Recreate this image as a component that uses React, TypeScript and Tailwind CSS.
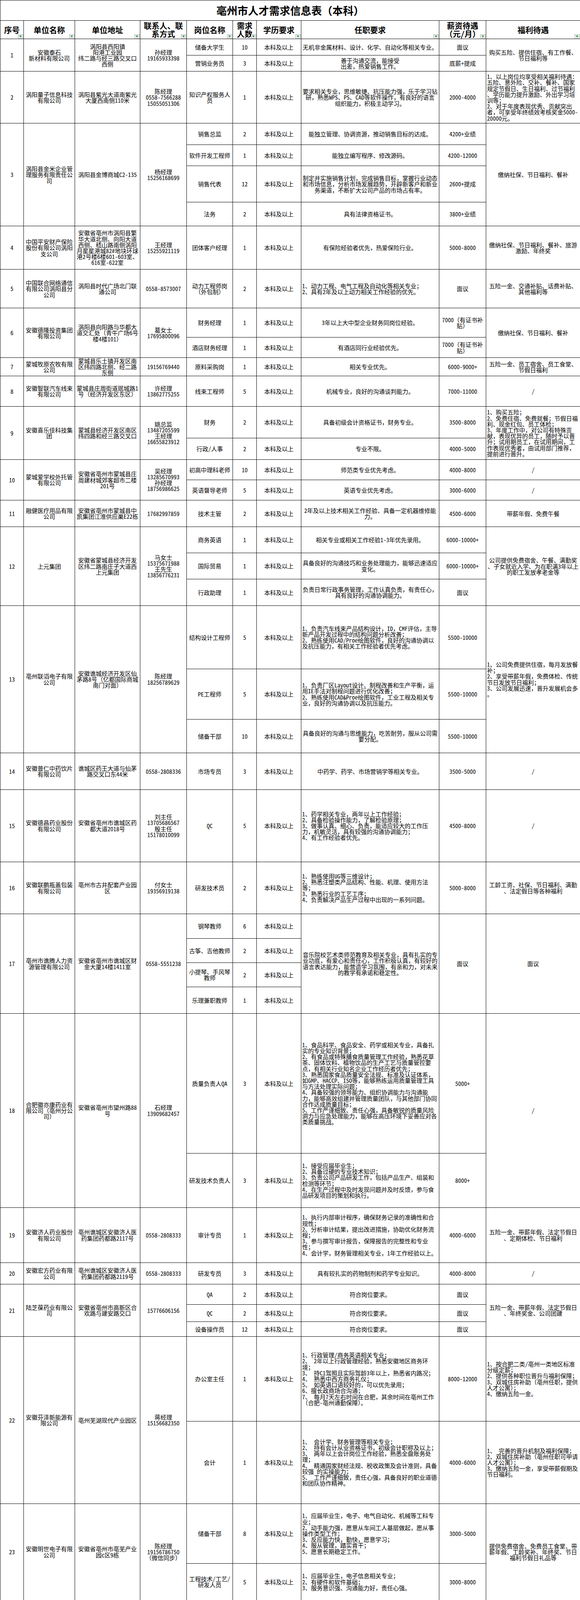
import React from "react";

type C = { t: string; l?: boolean };
type Sub = { h: string; p: string; n: string; r?: C; s?: C; b?: C };
type Co = { no: string; name: string; addr: string; ct: string; subs: Sub[]; r?: C; s?: C; b?: C };

const data: Co[] = [
  {
    no: "1", name: "安徽泰石\n新材料有限公司", addr: "涡阳县西阳镇\n阳港工业园\n纬二路与经三路交叉口\n西侧", ct: "孙经理\n19165933398",
    b: { t: "购买五险、提供住宿、有工作餐、\n节日福利等" },
    subs: [
      { h: "h-[42px]", p: "储备大学生", n: "10", r: { t: "无机非金属材料、设计、化学、自动化等相关专业。" }, s: { t: "面议" } },
      { h: "h-[41px]", p: "营销业务员", n: "3", r: { t: "善于沟通交流，能接受\n出差，热爱销售工作。" }, s: { t: "底薪+提成" } },
    ],
  },
  {
    no: "2", name: "涡阳量子信息科技\n有限公司", addr: "涡阳县紫光大道南紫光\n大厦西南侧110米", ct: "陈经理\n0558-7566288\n15055051306",
    subs: [
      {
        h: "h-[133px]", p: "知识产权服务人\n员", n: "1",
        r: { t: "要求相关专业，思维敏捷、抗压能力强，乐于学习钻\n研，熟悉WPS、PS、CAD等软件操作，有良好的语言\n组织能力，积极主动学习。" },
        s: { t: "2000-4000" },
        b: { l: true, t: "1、以上岗位均享受相关福利待遇：\n五险、意外险、交补、餐补、国家\n规定节假日、生日福利、过节福利\n、学历能力提升激励、外出学习培\n训等；\n2、对于年度表现优秀、贡献突出\n者，可享受年终绩效考核奖金5000-\n20000元。" },
      },
    ],
  },
  {
    no: "3", name: "涡阳县金米企业管\n理服务有限责任公\n司", addr: "涡阳县金博商城C2-135", ct: "杨经理\n15256168699",
    b: { t: "缴纳社保、节日福利、餐补" },
    subs: [
      { h: "h-[55px]", p: "销售总监", n: "2", r: { t: "能独立管理、协调资源，推动销售目标的达成。" }, s: { t: "4200+业绩" } },
      { h: "h-[54px]", p: "软件开发工程师", n: "1", r: { t: "能独立编写程序、修改源码。" }, s: { t: "4200-12000" } },
      { h: "h-[93px]", p: "销售代表", n: "12", r: { t: "制定并实施销售计划，完成销售目标，掌握行业动态\n和市场信息，分析市场发展趋势，开辟新客户和新业\n务渠道，不断扩大公司产品的市场占有率。" }, s: { t: "2600+提成" } },
      { h: "h-[61px]", p: "法务", n: "2", r: { t: "具有法律资格证书。" }, s: { t: "3800+业绩" } },
    ],
  },
  {
    no: "4", name: "中国平安财产保险\n股份有限公司涡阳\n支公司", addr: "安徽省亳州市涡阳县繁\n华大道北侧、向阳大道\n西侧、嵇山路南侧涡阳\n月星星港城82#地块环球\n港2号楼6楼601-603室、\n616室-622室", ct: "王经理\n15255921119",
    subs: [
      { h: "h-[111px]", p: "团体客户经理", n: "1", r: { t: "有保险经验者优先，热爱保险行业。" }, s: { t: "5000-8000" }, b: { t: "缴纳社保、节日福利、餐补、旅游\n激励、年终奖" } },
    ],
  },
  {
    no: "5", name: "中国联合网络通信\n有限公司涡阳县分\n公司", addr: "涡阳县时代广场北门联\n通公司", ct: "0558-8573007",
    subs: [
      { h: "h-[99px]", p: "动力工程师岗\n（外包制）", n: "2", r: { l: true, t: "1、动力工程、电气工程及自动化等相关专业；\n2、具有2年及以上动力相关工作经验的优先。" }, s: { t: "面议" }, b: { t: "五险一金、交通补贴、话费补贴、\n其他福利等" } },
    ],
  },
  {
    no: "6", name: "安徽德隆投资集团\n有限公司", addr: "涡阳县向阳路与华都大\n道交汇处（青牛广场6号\n楼4楼101）", ct: "葛女士\n17695800096",
    b: { t: "缴纳社保、节日福利、餐补" },
    subs: [
      { h: "h-[75px]", p: "财务经理", n: "1", r: { t: "3年以上大中型企业财务同岗位经验。" }, s: { t: "7000（有证书补\n贴）" } },
      { h: "h-[52px]", p: "酒店财务经理", n: "1", r: { t: "有酒店同行业经验优先。" }, s: { t: "7000（有证书补\n贴）" } },
    ],
  },
  {
    no: "7", name: "蒙城牧原农牧有限\n公司", addr: "蒙城县乐土镇开发区南\n区纬四路北侧、经二路\n东侧", ct: "19156769440",
    subs: [
      { h: "h-[46px]", p: "原料采购岗", n: "1", r: { t: "相关专业优先。" }, s: { t: "6000-9000+" }, b: { t: "五险一金、员工宿舍、员工食堂、\n节假日福利" } },
    ],
  },
  {
    no: "8", name: "安徽智联汽车线束\n有限公司", addr: "蒙城县庄周街道珉城路1\n号（经济开发区东区）", ct: "许经理\n13862775255",
    subs: [
      { h: "h-[78px]", p: "线束工程师", n: "5", r: { t: "机械专业，良好的沟通谈判能力。" }, s: { t: "7000-11000" }, b: { t: "/" } },
    ],
  },
  {
    no: "9", name: "安徽喜乐佳科技集\n团", addr: "蒙城县经济开发区南区\n纬四路和经三路交叉口", ct: "姚总监\n13487205599\n王经理\n16655823912",
    b: { l: true, t: "1、购买五险；\n2、免费住宿、免费就餐；节假日福\n利、现金红包、员工体检；\n3、年度工作中，对公司有特殊贡\n献，表现优异的员工，随时予以晋\n升；试用期员工，在试用期间，工\n作表现优秀者，由试用部门推荐，\n提前进行晋升。" },
    subs: [
      { h: "h-[81px]", p: "财务", n: "2", r: { t: "具备初级会计资格证书，财务专业。" }, s: { t: "3500-8000" } },
      { h: "h-[55px]", p: "行政/人事", n: "2", r: { t: "专业不限。" }, s: { t: "4000-5000" } },
    ],
  },
  {
    no: "10", name: "蒙城爱学校外托管\n有限公司", addr: "安徽省亳州市蒙城县庄\n周建材城郊客超市二楼\n201号", ct: "吴经理\n13285670993\n孙经理\n18756986625",
    subs: [
      { h: "h-[52px]", p: "初高中理科老师", n: "10", r: { t: "师范类专业优先考虑。" }, s: { t: "4000-8000" }, b: { t: "/" } },
      { h: "h-[52px]", p: "英语督导老师", n: "5", r: { t: "英语专业优先考虑。" }, s: { t: "3000-6000" }, b: { t: "/" } },
    ],
  },
  {
    no: "11", name: "融健医疗用品有限\n公司", addr: "安徽省亳州市蒙城县中\n凯集团江淮供应巢E22栋", ct: "17682997859",
    subs: [
      { h: "h-[68px]", p: "技术主管", n: "2", r: { t: "2年及以上技术相关工作经验、具备一定机器维修能\n力。" }, s: { t: "4500-6000" }, b: { t: "带薪年假、免费午餐" } },
    ],
  },
  {
    no: "12", name: "上元集团", addr: "安徽省蒙城县经济开发\n区纬二路南庄子大道西\n上元集团", ct: "马女士\n15375671988\n王先生\n13856776231",
    b: { t: "公司提供免费宿舍、午餐、满勤奖\n、子女就近入学、为在职满3年以上\n的职工发放孝老金等" },
    subs: [
      { h: "h-[67px]", p: "商务英语", n: "1", r: { t: "相关专业或相关工作经验1-3年优先录用。" }, s: { t: "6000-10000+" } },
      { h: "h-[67px]", p: "国际贸易", n: "1", r: { t: "具备良好的沟通技巧和业务处理能力，能够迅速适应\n变化。" }, s: { t: "6000-10000+" } },
      { h: "h-[68px]", p: "行政助理", n: "1", r: { t: "负责日常行政事务管理，工作认真负责，有责任心，\n具有良好的沟通协调能力。" }, s: { t: "面议" } },
    ],
  },
  {
    no: "13", name: "亳州联滔电子有限\n公司", addr: "安徽谯城经济开发区仙\n茅路8号（亿都国际商城\n南门对面）", ct: "陈经理\n18256789629",
    b: { l: true, t: "1、公司免费提供住宿，每月发放餐\n补；\n2、享受带薪年假，免费体检、传统\n节日发放节日福利；\n3、公司发展迅速，晋升发展机会多\n。" },
    subs: [
      { h: "h-[162px]", p: "结构设计工程师", n: "5", r: { l: true, t: "1、负责汽车线束产品结构设计，ID，CMF评估，主导\n新产品开发过程中的结构问题分析改善；\n2、熟练使用CAD/Proe绘图软件，良好的沟通协调以\n及抗压能力，有相关工作经验者优先考虑。" }, s: { t: "5500-10000" } },
      { h: "h-[129px]", p: "PE工程师", n: "5", r: { l: true, t: "1、负责厂区Layout设计、制程改善和生产平衡，运\n用IE手法对制程问题进行优化改善；\n2、熟练使用CAD&Proe绘图软件，工业工程及相关专\n业，良好的沟通协调以及抗压能力。" }, s: { t: "5500-10000" } },
      { h: "h-[86px]", p: "储备干部", n: "10", r: { t: "具备良好的沟通与思维能力，吃苦耐劳，服从公司需\n要分配。" }, s: { t: "5500-10000" } },
    ],
  },
  {
    no: "14", name: "安徽普仁中药饮片\n有限公司", addr: "谯城区药王大道与仙茅\n路交叉口东44米", ct: "0558-2808336",
    subs: [
      { h: "h-[94px]", p: "市场专员", n: "3", r: { t: "中药学、药学、市场营销学等相关专业。" }, s: { t: "3500-5000" }, b: { t: "/" } },
    ],
  },
  {
    no: "15", name: "安徽德昌药业股份\n有限公司", addr: "安徽省亳州市谯城区药\n都大道2018号", ct: "刘主任\n13705686567\n殷主任\n15178010099",
    subs: [
      { h: "h-[185px]", p: "QC", n: "5", r: { l: true, t: "1、药学相关专业，两年以上工作经验；\n2、具备检验操作能力，了解检验原理；\n3、做事认真、细心、负责，能适应较大的工作压\n力，机敏灵活，具有较强的沟通协调能力；\n4、有工作经验者优先。" }, s: { t: "4500-8000" }, b: { t: "/" } },
    ],
  },
  {
    no: "16", name: "安徽联鹏瓶盖包装\n有限公司", addr: "亳州市古井配套产业园\n区", ct: "付女士\n19356919138",
    subs: [
      { h: "h-[133px]", p: "研发技术员", n: "2", r: { l: true, t: "1、熟练使用UG等三维设计；\n2、熟悉注塑类产品结构、性能、机理、使用方法\n等；\n3、熟悉行业的工艺工序；\n4、负责解决产品生产过程中出现的一系列问题。" }, s: { t: "5000-8000" }, b: { t: "工龄工资、社保、节日福利、满勤\n、法定假日等各种福利" } },
    ],
  },
  {
    no: "17", name: "亳州市谯腾人力资\n源管理有限公司", addr: "安徽省亳州市谯城区财\n金大厦14楼1411室", ct: "0558-5551238",
    r: { t: "音乐院校艺术类师范教育及相关专业，具有扎实的专\n业功底，有爱心和责任心，工作积极认真，有较好的\n语言表达能力，能营造学习氛围，有亲和力，对未来\n的教学有承诺和稳定性。" },
    s: { t: "面议" }, b: { t: "面议" },
    subs: [
      { h: "h-[63px]", p: "钢琴教师", n: "6" },
      { h: "h-[62px]", p: "古筝、吉他教师", n: "2" },
      { h: "h-[62px]", p: "小提琴、手风琴\n教师", n: "2" },
      { h: "h-[68px]", p: "乐理兼职教师", n: "1" },
    ],
  },
  {
    no: "18", name: "合肥徽亦康药业有\n限公司（亳州分公\n司）", addr: "安徽省亳州市望州路88\n号", ct: "石经理\n13909682457",
    b: { t: "/" },
    subs: [
      { h: "h-[358px]", p: "质量负责人QA", n: "3", r: { l: true, t: "1、食品科学、食品安全、药学或相关专业，具备扎\n实的专业知识背景；\n2、有食品或特殊膳食质量管理工作经验，熟悉花草\n茶、固体饮料、植物饮品的生产工艺与质量管控要\n点，有相关行业知名企业工作经历者优先；\n3、熟悉国家食品质量安全法规、标准及认证体系，\n如GMP、HACCP、ISO等，能够熟练运用质量管理工具\n与方法处理实际问题；\n4、具备较强的领导能力、组织协调能力与沟通能\n力，能够高效组建并管理质量团队，与其他部门协同\n合作达成质量目标；\n5、工作严谨细致、责任心强，具备敏锐的质量风险\n洞力与应急处理能力，能够在高压环境下妥善应对各\n类质量挑战。" }, s: { t: "5000+" } },
      { h: "h-[139px]", p: "研发技术负责人", n: "3", r: { l: true, t: "1、接受应届毕业生；\n2、具备过硬的专业技术知识；\n3、负责公司产品研发工作，包括产品生产、组装和\n检测等环节；\n4、在生产过程中及时发现问题并及时反馈，参与食\n品研发项目的策划和执行。" }, s: { t: "8000+" } },
    ],
  },
  {
    no: "19", name: "安徽济人药业股份\n有限公司", addr: "亳州谯城区安徽济人医\n药集团药都路2117号", ct: "0558-2808333",
    subs: [
      { h: "h-[141px]", p: "审计专员", n: "1", r: { l: true, t: "1、执行内部审计程序，确保财务记录的准确性和合\n规性；\n2、分析审计结果，提出改进措施，协助优化财务流\n程；\n3、参与撰写审计报告，保障报告的完整性和专业\n性；\n4、会计学，财务管理相关专业，1年工作经验以上。" }, s: { t: "4000-6000" }, b: { t: "五险一金、带薪年假、法定节假日\n、定期体检、节日福利" } },
    ],
  },
  {
    no: "20", name: "安徽宏方药业有限\n公司", addr: "亳州谯城区安徽济人医\n药集团药都路2119号", ct: "0558-2808333",
    subs: [
      { h: "h-[55px]", p: "研发专员", n: "3", r: { t: "具有较扎实的药物制剂和药学专业知识。" }, s: { t: "4000-8000" }, b: { t: "/" } },
    ],
  },
  {
    no: "21", name: "陆芝葆药业有限公\n司", addr: "安徽省亳州市高新区合\n欢路与建安路交口", ct: "15776606156",
    b: { t: "五险一金、带薪年假、法定节假日\n、年终奖金、公司团建" },
    subs: [
      { h: "h-[52px]", p: "QA", n: "2", r: { t: "符合岗位要求。" }, s: { t: "面议" } },
      { h: "h-[44px]", p: "QC", n: "2", r: { t: "符合岗位要求。" }, s: { t: "面议" } },
      { h: "h-[38px]", p: "设备操作员", n: "12", r: { t: "符合岗位要求。" }, s: { t: "面议" } },
    ],
  },
  {
    no: "22", name: "安徽芬泽新能源有\n限公司", addr: "亳州芜湖现代产业园区", ct: "蒋经理\n15156682350",
    subs: [
      {
        h: "h-[217px]", p: "办公室主任", n: "1",
        r: { l: true, t: "1、行政管理/商务英语相关专业；\n2、 2年以上行政管理经验，熟悉安徽地区商务环\n境；\n3、 持C1驾照且实际驾龄3年以上，熟悉省内路况；\n4、 熟悉中西方商务礼仪；\n5、 如英语口语较好的，可以优先录用；\n6、擅长政商场合沟通；\n7、 每月7天左右时间在合肥，其余时间在亳州工作\n（合肥-亳州通勤保障）。" },
        s: { t: "8000-12000" },
        b: { l: true, t: "1、按合肥二类/亳州一类地区标准\n分级定薪；\n2、提供各种职位晋升与福利保障；\n3、双城住房补助（亳州任职，提供\n人才公寓）；\n4、缴纳五险一金。" },
      },
      {
        h: "h-[211px]", p: "会计", n: "1",
        r: { l: true, t: "1、 会计学、财务管理等相关专业；\n2、 持有会计从业资格证书，初级会计职称及以上；\n3、 两年以上会计岗位工作经验，熟悉全盘账务处\n理；\n4、 精通国家财经法规、税收政策及会计准则，具备\n较强 的实操能力；\n5、 工作严谨细致，责任心强，具备良好的职业道德\n和团队协作精神。" },
        s: { t: "4000-6000" },
        b: { l: true, t: "1、 完善的晋升机制及福利保障；\n2、双城住房补助（亳州任职可申请\n人才公寓）；\n3、缴纳五险一金，享受带薪假期及\n节日福利。" },
      },
    ],
  },
  {
    no: "23", name: "安徽明世电子有限\n公司", addr: "安徽省亳州市亳芜产业\n园c区9栋", ct: "陈经理\n19156786750\n（微信同步）",
    b: { t: "提供免费宿舍、免费员工食堂、带\n薪年假、工龄奖补、年终奖、节日\n福利节假日礼品等" },
    subs: [
      { h: "h-[153px]", p: "储备干部", n: "8", r: { l: true, t: "1、应届毕业生，电子、电气自动化、机械等工科专\n业；\n2、动手能力强，愿意从车间工人基层做起，愿从事\n操作类型工作；\n3、反应能力快，勤快，愿意学习；\n4、服从管理，踏实肯干；\n5、愿意长期稳定工作。" }, s: { t: "3000-5000" } },
      { h: "h-[94px]", p: "工程技术/工艺/\n研发人员", n: "5", r: { l: true, t: "1、应届毕业生，电子信息相关专业；\n2、有硬件和软件基础；\n3、服务意识强、沟通能力好，责任心强。" }, s: { t: "3000-8000" } },
    ],
  },
];

const base = "border border-black align-middle px-[2px] py-0 whitespace-pre leading-[15.2px]";

function Cell({ c, rowSpan }: { c: C; rowSpan?: number }) {
  return (
    <td rowSpan={rowSpan} className={`${base} ${c.l ? "text-left" : "text-center"}`}>
      {c.t}
    </td>
  );
}

function Filter() {
  return (
    <span className="absolute right-[1px] bottom-[1px] flex h-[10px] w-[13px] items-center justify-center border border-[#a6a6a6] bg-[#f3f3f3]">
      <svg width="7" height="5" viewBox="0 0 7 5">
        <path d="M0 0H7L3.5 5Z" fill="#1f9d48" />
      </svg>
    </span>
  );
}

function Th({ t }: { t: string }) {
  return (
    <th className="relative whitespace-pre border border-black p-0 align-middle text-center text-[20px] font-bold leading-[21px]">
      {t}
      <Filter />
    </th>
  );
}

export default function App() {
  const widths = ["w-[60px]", "w-[131px]", "w-[167px]", "w-[119px]", "w-[118px]", "w-[61px]", "w-[114px]", "w-[353px]", "w-[120px]", "w-[241px]"];
  const heads = ["序号", "单位名称", "单位地址", "联系人、联\n系方式", "岗位名称", "需求\n人数", "学历要求", "任职要求", "薪资待遇\n（元/月）", "福利待遇"];
  return (
    <div className="w-[1484px] bg-white text-black font-['Noto_Sans_Mono_CJK_SC','Noto_Sans_CJK_SC','Liberation_Sans',sans-serif] text-[15px]">
      <table className="w-[1484px] table-fixed border-collapse">
        <colgroup>
          {widths.map((w, i) => (
            <col key={i} className={w} />
          ))}
        </colgroup>
        <tbody>
          <tr className="h-[52px]">
            <td colSpan={10} className="border border-black text-center align-middle text-[27px] font-bold leading-[30px]">
              亳州市人才需求信息表（本科）
            </td>
          </tr>
          <tr className="h-[47px]">
            {heads.map((h) => (
              <Th key={h} t={h} />
            ))}
          </tr>
          {data.map((co) =>
            co.subs.map((s, i) => {
              const rs = co.subs.length;
              return (
                <tr key={co.no + "-" + i} className={s.h}>
                  {i === 0 && (
                    <>
                      <Cell c={{ t: co.no }} rowSpan={rs} />
                      <Cell c={{ t: co.name }} rowSpan={rs} />
                      <Cell c={{ t: co.addr }} rowSpan={rs} />
                      <Cell c={{ t: co.ct }} rowSpan={rs} />
                    </>
                  )}
                  <Cell c={{ t: s.p }} />
                  <Cell c={{ t: s.n }} />
                  <Cell c={{ t: "本科及以上" }} />
                  {co.r ? i === 0 && <Cell c={co.r} rowSpan={rs} /> : s.r && <Cell c={s.r} />}
                  {co.s ? i === 0 && <Cell c={co.s} rowSpan={rs} /> : s.s && <Cell c={s.s} />}
                  {co.b ? i === 0 && <Cell c={co.b} rowSpan={rs} /> : s.b && <Cell c={s.b} />}
                </tr>
              );
            })
          )}
        </tbody>
      </table>
    </div>
  );
}
